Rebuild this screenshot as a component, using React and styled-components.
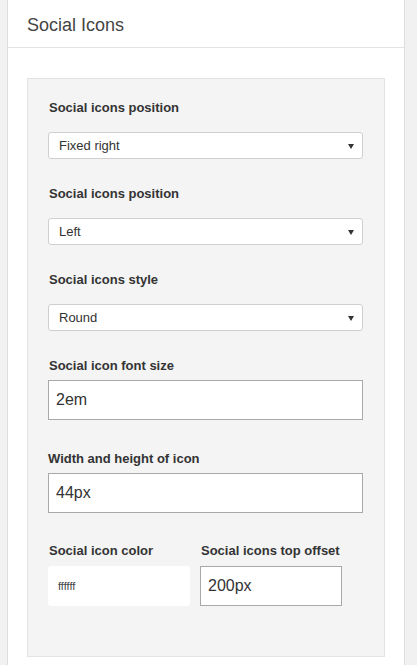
import { createGlobalStyle, styled } from 'styled-components';

const GlobalStyle = createGlobalStyle`
  html, body {
    margin: 0;
    padding: 0;
    background: #f1f1f1;
    font-family: "Liberation Sans", Arial, sans-serif;
  }
`;

const Page = styled.div`
  padding: 0 12px 0 7px;
  min-height: 665px;
  box-sizing: border-box;
`;

const Card = styled.div`
  background: #fff;
  border: 1px solid #dedede;
  border-top: none;
`;

const CardHeader = styled.div`
  height: 48px;
  box-sizing: border-box;
  padding: 15px 19px 0;
  border-bottom: 1px solid #e2e2e2;
  font-size: 18px;
  color: #444;
`;

const CardBody = styled.div`
  padding: 30px 19px 10px;
`;

const Panel = styled.div`
  background: #f4f4f4;
  border: 1px solid #e3e3e3;
  padding: 21px 21px 50px 20px;
`;

const Field = styled.div`
  margin-bottom: ${(props) => props.gap || '27px'};
`;

const Label = styled.label`
  display: block;
  font-size: 13px;
  line-height: 16px;
  font-weight: 700;
  color: #333;
  margin-bottom: ${(props) => props.gap || '16px'};
  margin-left: ${(props) => props.shift || '1px'};
  white-space: nowrap;
`;

const SelectWrap = styled.div`
  position: relative;
  &::after {
    content: '';
    position: absolute;
    right: 9px;
    top: 12px;
    border-left: 3px solid transparent;
    border-right: 3px solid transparent;
    border-top: 5px solid #333;
    pointer-events: none;
  }
`;

const Select = styled.select`
  appearance: none;
  display: block;
  width: 100%;
  height: 27px;
  box-sizing: border-box;
  border: 1px solid #cfcfcf;
  border-radius: 3px;
  background: #fff;
  padding: 0 10px;
  font-family: "Liberation Sans", Arial, sans-serif;
  font-size: 13px;
  color: #333;
  outline: none;
`;

const TextInput = styled.input`
  display: block;
  width: 100%;
  height: 40px;
  box-sizing: border-box;
  border: 1px solid #a9a9a9;
  border-radius: 0;
  background: #fff;
  padding: 0 7px;
  font-family: "Liberation Sans", Arial, sans-serif;
  font-size: 16px;
  color: #333;
  outline: none;
`;

const ColorInput = styled.input`
  display: block;
  width: 100%;
  height: 40px;
  box-sizing: border-box;
  border: none;
  border-radius: 3px;
  background: #fff;
  padding: 0 10px;
  font-family: "Liberation Sans", Arial, sans-serif;
  font-size: 11px;
  color: #444;
  outline: none;
`;

const Row = styled.div`
  display: grid;
  grid-template-columns: 142px 142px;
  column-gap: 10px;
`;

function SelectField({ label, value, options }) {
  return (
    <Field>
      <Label>{label}</Label>
      <SelectWrap>
        <Select defaultValue={value}>
          {options.map((o) => (
            <option key={o}>{o}</option>
          ))}
        </Select>
      </SelectWrap>
    </Field>
  );
}

function App() {
  return (
    <Page>
      <GlobalStyle />
      <Card>
        <CardHeader>Social Icons</CardHeader>
        <CardBody>
          <Panel>
            <SelectField
              label="Social icons position"
              value="Fixed right"
              options={['Fixed left', 'Fixed right', 'Inline']}
            />
            <SelectField label="Social icons position" value="Left" options={['Left', 'Center', 'Right']} />
            <SelectField label="Social icons style" value="Round" options={['Round', 'Square', 'Plain']} />
            <Field gap="31px">
              <Label gap="6px">Social icon font size</Label>
              <TextInput defaultValue="2em" />
            </Field>
            <Field gap="30px">
              <Label gap="6px" shift="0">
                Width and height of icon
              </Label>
              <TextInput defaultValue="44px" />
            </Field>
            <Row>
              <Field gap="0">
                <Label gap="7px">Social icon color</Label>
                <ColorInput defaultValue="ffffff" />
              </Field>
              <Field gap="0">
                <Label gap="7px">Social icons top offset</Label>
                <TextInput defaultValue="200px" />
              </Field>
            </Row>
          </Panel>
        </CardBody>
      </Card>
    </Page>
  );
}

export default App;
